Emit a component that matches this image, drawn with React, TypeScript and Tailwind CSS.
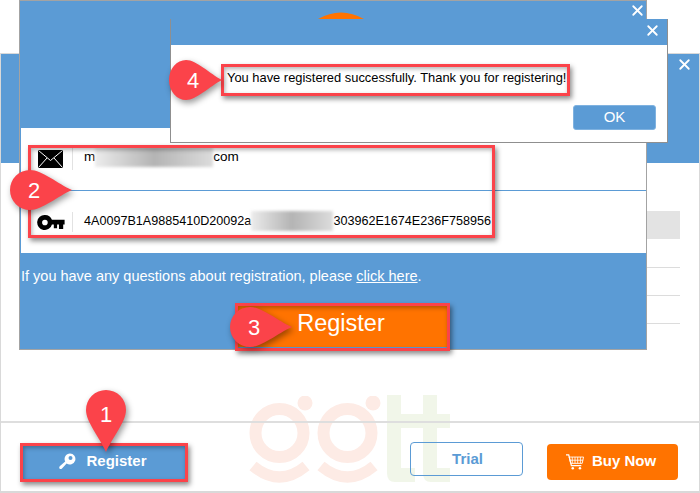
import { X } from 'lucide-react'

const font = "font-['Liberation_Sans',Arial,sans-serif]"

function Pin({ num, className, width = 62, vertical }: { num: number; className: string; width?: number; vertical?: boolean }) {
  return (
    <div className={`absolute flex ${className}`}>
      {vertical ? (
        <svg width="40" height="62" viewBox="0 0 40 62" className="drop-shadow-[2px_3px_3px_rgba(0,0,0,0.4)]">
          <path d="M20 62 C14 48 0 32 0 20 A20 20 0 0 1 40 20 C40 32 26 48 20 62Z" fill="#fb434a" />
        </svg>
      ) : (
        <svg width={width} height="40" viewBox="0 0 62 40" preserveAspectRatio="none" className="drop-shadow-[2px_3px_3px_rgba(0,0,0,0.4)]">
          <path d="M62 20 C48 14 32 0 20 0 A20 20 0 0 0 20 40 C32 40 48 26 62 20Z" fill="#fb434a" />
        </svg>
      )}
      {vertical ? (
        <span className="absolute left-0 top-0 flex h-12 w-10 items-center justify-center text-[22px] text-white">{num}</span>
      ) : (
        <span className="absolute left-0 top-0 flex h-10 w-12 items-center justify-center text-[22px] text-white">{num}</span>
      )}
    </div>
  )
}

function Callout({ className }: { className: string }) {
  return (
    <div className={`pointer-events-none absolute border-[3px] border-[#fb434a] shadow-[2px_3px_5px_rgba(0,0,0,0.45),inset_1px_2px_4px_rgba(0,0,0,0.3)] ${className}`} />
  )
}

function CloseIcon() {
  return <X size={17} strokeWidth={2.6} className="text-white" />
}

function Watermark() {
  return (
    <svg width="140" height="92" viewBox="0 0 140 92" className="absolute left-[245px] top-[342px]" fill="none">
      <circle cx="33.5" cy="37" r="24" stroke="#fdebe5" strokeWidth="12" />
      <circle cx="59" cy="7" r="7.5" fill="#fdebe5" />
      <path d="M7 70 Q33.5 92 60 70" stroke="#fdebe5" strokeWidth="11" />
      <circle cx="101.5" cy="37" r="24" stroke="#fdebe5" strokeWidth="12" />
      <circle cx="127" cy="7" r="7.5" fill="#fdebe5" />
      <path d="M75 70 Q101.5 92 128 70" stroke="#fdebe5" strokeWidth="11" />
    </svg>
  )
}

function WatermarkT() {
  return (
    <svg width="64" height="88" viewBox="0 0 64 88" className="absolute left-[386px] top-[341px]" fill="#f1f6e9">
      <path d="M0 0 H14 V19 H36 V0 H50 V19 H63 V33 H50 V73 H63 V87 H44 Q36 87 36 78 V33 H14 V73 H28 V87 H8 Q0 87 0 78Z" />
    </svg>
  )
}

function KeyBlack() {
  return (
    <svg width="28" height="15" viewBox="0 0 29 16">
      <path fillRule="evenodd" d="M8 0 A8 8 0 0 1 15.5 5 H29 V10 H27.5 V15 H23 V10 H21 V14 H17.5 V10 H15.5 A8 8 0 1 1 8 0Z M8 5 A3 3 0 1 0 8 11 A3 3 0 1 0 8 5Z" fill="#000" />
    </svg>
  )
}

function Envelope() {
  return (
    <svg width="25" height="18" viewBox="0 0 25 18">
      <rect width="25" height="18" fill="#000" />
      <path d="M0.5 0.5 L12.5 10.5 L24.5 0.5 M0.5 17.5 L9 8 M24.5 17.5 L16 8" stroke="#fff" strokeWidth="1" fill="none" />
    </svg>
  )
}

function SmallKey() {
  return (
    <svg width="17" height="17" viewBox="0 0 17 17">
      <path fillRule="evenodd" d="M11 0.5 A5.5 5.5 0 1 1 7.6 10.4 L3 15.5 Q1.5 16.5 0.5 15.5 Q-0.2 14 1 13 L6.2 8.6 A5.5 5.5 0 0 1 11 0.5Z M11.5 3 A2 2 0 1 0 11.5 7 A2 2 0 1 0 11.5 3Z" fill="#fff" />
    </svg>
  )
}

function Cart() {
  return (
    <svg width="18" height="18" viewBox="0 0 20 18" fill="none" stroke="#fff" strokeWidth="1">
      <path d="M0 1 H3 L6 13 H17" strokeWidth="1.4" />
      <path d="M3.5 3.5 H19.5 L18 10.5 H5.2 Z" />
      <path d="M7 3.5 V10.5 M10 3.5 V10.5 M13 3.5 V10.5 M16 3.5 V10.5 M4.2 7 H19" strokeWidth="0.9" />
      <circle cx="7.5" cy="16" r="1.4" fill="#fff" stroke="none" />
      <circle cx="15.5" cy="16" r="1.4" fill="#fff" stroke="none" />
    </svg>
  )
}

function Blur({ className }: { className: string }) {
  return <span className={`block h-[20px] bg-linear-to-r from-[#ececec] via-[#b4b4b4] to-[#dcdcdc] blur-[1.5px] ${className}`} />
}

export default function App() {
  return (
    <div className={`relative h-[493px] w-[700px] overflow-hidden bg-white ${font}`}>
      {/* Ventana de fondo */}
      <div className="absolute left-0 top-[53px] flex h-[440px] w-[700px] flex-col border-x border-b-2 border-t border-[#d9d9d9] bg-white">
        <div className="flex h-[109px] justify-end bg-[#5b9bd5] pr-[6px] pt-[2px]">
          <CloseIcon />
        </div>
        <div className="ml-[30px] mr-[19px] mt-[48px] flex flex-col">
          <div className="h-[28px] bg-[#e3e3e3]" />
          <div className="h-[29px] border-b border-[#dcdcdc]" />
          <div className="h-[28px] border-b border-[#dcdcdc]" />
          <div className="h-[28px] border-b border-[#dcdcdc]" />
        </div>
        <Watermark />
        <WatermarkT />
        <div className="relative mt-auto flex h-[70px] items-center justify-between border-t-2 border-[#dedede] pl-[22px] pr-[21px] pt-[9px]">
          <button className="flex h-[34px] w-[164px] items-center justify-center gap-[10px] bg-[#5b9bd5] pr-[4px] text-[15px] font-bold text-white">
            <SmallKey />
            Register
          </button>
          <div className="flex items-center gap-6">
            <button className="-mt-[5px] h-[34px] w-[113px] rounded border border-[#5b9bd5] pl-[2px] text-[15px] font-bold text-[#5b9bd5]">Trial</button>
            <button className="flex h-[36px] w-[131px] items-center justify-center gap-2 rounded bg-[#ff7300] pr-[3px] text-[15px] font-bold text-white">
              <Cart />
              Buy Now
            </button>
          </div>
        </div>
      </div>

      {/* Ventana de registro */}
      <div className="absolute left-[19px] top-0 flex h-[350px] w-[628px] flex-col border border-[#a3a3a3] bg-[#5b9bd5] pl-px">
        <div className="relative flex h-[127px] justify-end pt-[1px]">
          <CloseIcon />
          <svg width="46" height="7" viewBox="0 0 46 7" className="absolute left-[297px] top-[11px]">
            <path d="M0 7 Q23 -6 46 7Z" fill="#ff7300" />
          </svg>
        </div>
        <div className="flex h-[125px] flex-col bg-white text-[13.5px] text-black">
          <div className="flex h-[63px] items-start border-b border-[#5b9bd5] pl-[16px] pt-[19px]">
            <span className="flex h-[23px] w-[36px] items-center justify-center border-r border-[#e2e2e2] pr-[9px]"><Envelope /></span>
            <span className="ml-[11px] flex items-center leading-[20px]">
              m<Blur className="w-[118px]" />com
            </span>
          </div>
          <div className="flex flex-1 items-start pl-[15px] pt-[21px]">
            <span className="flex h-[20px] w-[37px] justify-center border-r border-[#e2e2e2] pr-[7px] pt-[3px]"><KeyBlack /></span>
            <span className="ml-[11px] flex items-center leading-[18px] -mt-[1px] text-[12.6px]">
              4A0097B1A9885410D20092a<Blur className="w-[82px]" />303962E1674E236F758956
            </span>
          </div>
        </div>
        <p className="mt-[15px] text-[14.5px] leading-[16px] text-white">
          If you have any questions about registration, please <span className="underline">click here</span>.
        </p>
        <button className="ml-[216px] mt-[19px] h-[44px] w-[211px] bg-[#ff7300] pb-[3px] pr-[3px] text-[23.5px] text-white">Register</button>
      </div>

      {/* Aviso */}
      <div className="absolute left-[170px] top-[19px] flex h-[124px] w-[498px] flex-col border-b border-l border-r border-[#8f8f8f] bg-white">
        <div className="flex h-[26px] justify-end bg-[#5b9bd5] pr-[6px] pt-[3px]">
          <CloseIcon />
        </div>
        <p className="ml-[56px] mt-[26px] text-[12.9px] leading-[14px] text-black">You have registered successfully. Thank you for registering!</p>
        <button className="ml-auto mr-[11px] mt-[20px] h-[25px] w-[83px] rounded-[3px] border border-[#7fb2e0] bg-[#5b9bd5] text-[15px] text-white">OK</button>
      </div>

      <Callout className="left-[221px] top-[64px] h-[32px] w-[349px]" />
      <Callout className="left-[28px] top-[145px] h-[93px] w-[467px]" />
      <Callout className="left-[235px] top-[303px] h-[48px] w-[215px]" />
      <Callout className="left-[20px] top-[443px] h-[39px] w-[168px]" />

      <Pin num={4} width={53} className="left-[169px] top-[60px]" />
      <Pin num={2} className="left-[10px] top-[170px]" />
      <Pin num={3} className="left-[230px] top-[307px]" />
      <Pin num={1} vertical className="left-[86px] top-[390px]" />
    </div>
  )
}
